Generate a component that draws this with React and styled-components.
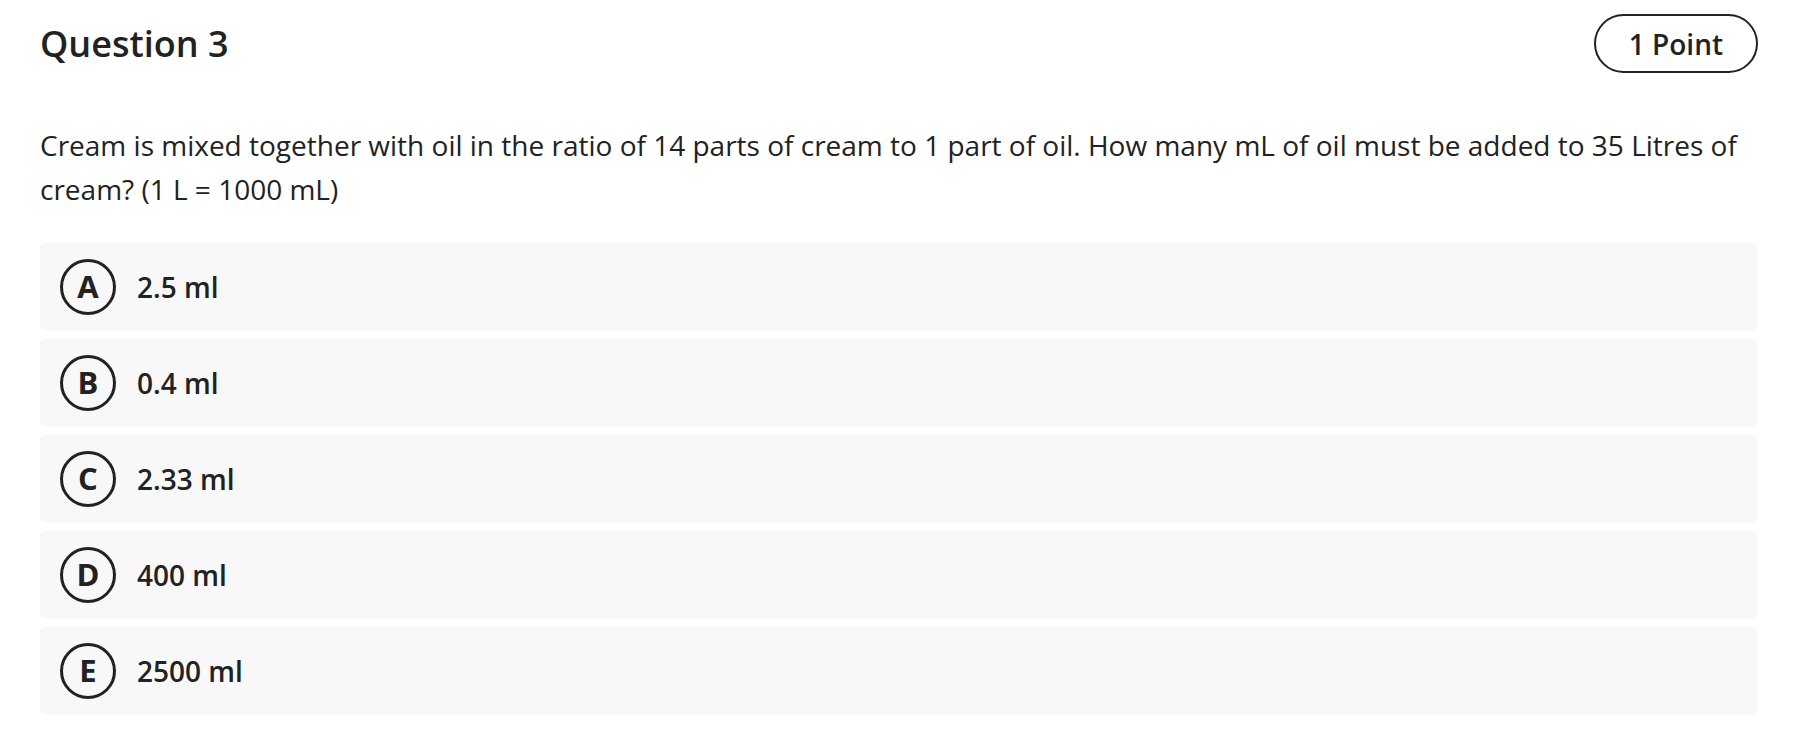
import React from "react";
import styled, { createGlobalStyle } from "styled-components";

const Global = createGlobalStyle`
  html, body { margin: 0; padding: 0; background: #ffffff; }
  body { font-family: "Open Sans", "Noto Sans", sans-serif; color: #222222; }
`;

const Page = styled.main`
  padding: 14px 40px 0 40px;
  display: flex;
  flex-direction: column;
`;

const Header = styled.header`
  display: flex;
  align-items: center;
  justify-content: space-between;
`;

const Title = styled.h1`
  margin: 0;
  font-size: 36px;
  font-weight: 600;
  line-height: 1.2;
  color: #222222;
`;

const Pill = styled.div`
  box-sizing: border-box;
  height: 59px;
  padding: 0 33px;
  border: 2px solid #222222;
  border-radius: 30px;
  display: flex;
  align-items: center;
  font-size: 28px;
  font-weight: 600;
  color: #222222;
`;

const Prompt = styled.p`
  margin: 50px 0 32px 0;
  font-size: 28px;
  line-height: 44px;
  font-weight: 400;
  color: #222222;
`;

const Options = styled.ul`
  list-style: none;
  margin: 0;
  padding: 0;
  display: flex;
  flex-direction: column;
  gap: 9px;
`;

const Option = styled.li`
  box-sizing: border-box;
  height: 87px;
  padding: 0 20px;
  border-radius: 5px;
  background: #f8f8f8;
  display: flex;
  align-items: center;
  gap: 21px;
`;

const Letter = styled.span`
  box-sizing: border-box;
  width: 56px;
  height: 56px;
  border: 3px solid #222222;
  border-radius: 50%;
  display: flex;
  align-items: center;
  justify-content: center;
  font-size: 31px;
  font-weight: 700;
  line-height: 1;
  color: #222222;
  flex: none;
`;

const Answer = styled.span`
  font-size: 28px;
  font-weight: 600;
  color: #222222;
`;

const answers = [
  ["A", "2.5 ml"],
  ["B", "0.4 ml"],
  ["C", "2.33 ml"],
  ["D", "400 ml"],
  ["E", "2500 ml"],
];

export default function App() {
  return (
    <>
      <Global />
      <Page>
        <Header>
          <Title>Question 3</Title>
          <Pill>1 Point</Pill>
        </Header>
        <Prompt>
          Cream is mixed together with oil in the ratio of 14 parts of cream to 1 part of oil. How many mL of oil must be added to 35 Litres of cream? (1 L = 1000 mL)
        </Prompt>
        <Options>
          {answers.map(([l, t]) => (
            <Option key={l}>
              <Letter>{l}</Letter>
              <Answer>{t}</Answer>
            </Option>
          ))}
        </Options>
      </Page>
    </>
  );
}
